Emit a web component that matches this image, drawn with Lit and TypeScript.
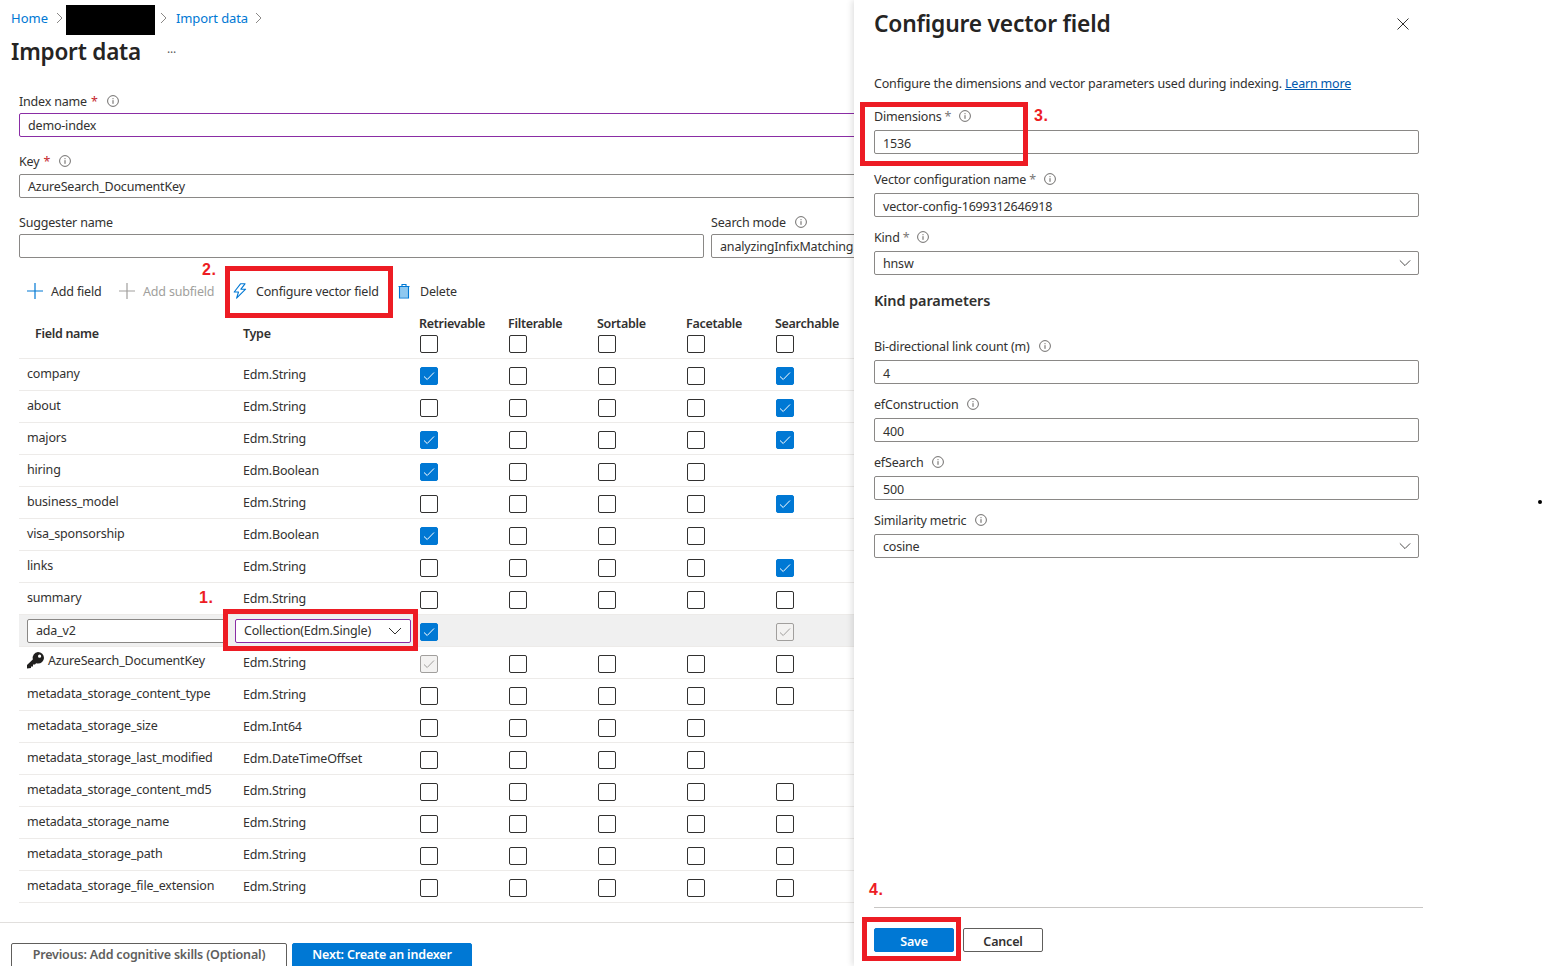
import { LitElement, html, css, svg, nothing } from 'lit';
import { customElement } from 'lit/decorators.js';

// R/F/S/A/Se flags: 0 empty, 1 checked, 2 disabled-checked, -1 no box
type Row = { name: string; type: string; flags: number[]; key?: boolean; editing?: boolean };

const rows: Row[] = [
  { name: 'company', type: 'Edm.String', flags: [1, 0, 0, 0, 1] },
  { name: 'about', type: 'Edm.String', flags: [0, 0, 0, 0, 1] },
  { name: 'majors', type: 'Edm.String', flags: [1, 0, 0, 0, 1] },
  { name: 'hiring', type: 'Edm.Boolean', flags: [1, 0, 0, 0, -1] },
  { name: 'business_model', type: 'Edm.String', flags: [0, 0, 0, 0, 1] },
  { name: 'visa_sponsorship', type: 'Edm.Boolean', flags: [1, 0, 0, 0, -1] },
  { name: 'links', type: 'Edm.String', flags: [0, 0, 0, 0, 1] },
  { name: 'summary', type: 'Edm.String', flags: [0, 0, 0, 0, 0] },
  { name: 'ada_v2', type: 'Collection(Edm.Single)', flags: [1, -1, -1, -1, 2], editing: true },
  { name: 'AzureSearch_DocumentKey', type: 'Edm.String', flags: [2, 0, 0, 0, 0], key: true },
  { name: 'metadata_storage_content_type', type: 'Edm.String', flags: [0, 0, 0, 0, 0] },
  { name: 'metadata_storage_size', type: 'Edm.Int64', flags: [0, 0, 0, 0, -1] },
  { name: 'metadata_storage_last_modified', type: 'Edm.DateTimeOffset', flags: [0, 0, 0, 0, -1] },
  { name: 'metadata_storage_content_md5', type: 'Edm.String', flags: [0, 0, 0, 0, 0] },
  { name: 'metadata_storage_name', type: 'Edm.String', flags: [0, 0, 0, 0, 0] },
  { name: 'metadata_storage_path', type: 'Edm.String', flags: [0, 0, 0, 0, 0] },
  { name: 'metadata_storage_file_extension', type: 'Edm.String', flags: [0, 0, 0, 0, 0] },
];

const columns = ['Retrievable', 'Filterable', 'Sortable', 'Facetable', 'Searchable'];

const info = html`<svg class="info" viewBox="0 0 12 12" width="12" height="12">
  <circle cx="6" cy="6" r="5.4" fill="none" stroke="#605e5c" stroke-width="0.9"></circle>
  <path d="M6 5.2v3.6M6 3.2v1" stroke="#605e5c" stroke-width="1" fill="none"></path>
</svg>`;

const chevronRight = html`<svg class="crumb-chevron" viewBox="0 0 7 12" width="7" height="12">
  <path d="M1 1l5 5-5 5" fill="none" stroke="#8a8886" stroke-width="1"></path>
</svg>`;

const chevronDown = html`<svg class="chevron-down" viewBox="0 0 14 8" width="14" height="8">
  <path d="M1 1l6 6 6-6" fill="none" stroke="#323130" stroke-width="1"></path>
</svg>`;

const plus = (color: string) => html`<svg viewBox="0 0 16 16" width="16" height="16">
  <path d="M8 0v16M0 8h16" fill="none" stroke=${color} stroke-width="1.2"></path>
</svg>`;

const bolt = svg`<path d="M7.5.8L1.2 9h4.3L3.6 15.2 12.6 6.2H7.9L12 .8z" fill="none" stroke="#0078d4" stroke-width="1.1" stroke-linejoin="round"></path>`;

const trash = svg`<path d="M3 4h8v10.5H3z" fill="#8ec8f0"></path>
  <path d="M1.5 3.5h11M2.5 3.5v11.5h9V3.5M5 3.5V1.5h4v2" fill="none" stroke="#0078d4" stroke-width="1.1"></path>`;

const keyIcon = svg`<path d="M11 0a6 6 0 0 1 6 6 6 6 0 0 1-6 5.6c-.7 0-1.3-.1-1.9-.3L8 12.4H6v2H4v1.6L0 16.4v-3.4l5.8-5.6A6 6 0 0 1 11 0zm1.6 2.6a1.6 1.6 0 1 0 0 3.2 1.6 1.6 0 0 0 0-3.2z" fill="#201f1e"></path>`;

@customElement('app-root')
export class AppRoot extends LitElement {
  static styles = css`
    :host {
      display: block;
      position: relative;
      width: 1544px;
      height: 966px;
      overflow: hidden;
      background: #fff;
      color: #323130;
      font-family: 'Noto Sans', 'Open Sans', sans-serif;
      font-size: 12.5px;
      letter-spacing: -0.18px;
    }

    a {
      color: #0078d4;
      text-decoration: none;
    }

    .main {
      display: flex;
      flex-direction: column;
      width: 900px;
      height: 966px;
      overflow: hidden;
    }

    .main > * {
      flex: none;
    }

    .crumbs {
      display: flex;
      align-items: flex-start;
      height: 30px;
      margin-top: 5px;
      padding-left: 11px;
      line-height: 26px;
      font-size: 13px;
      letter-spacing: 0;
    }

    .crumb-chevron {
      margin: 7px 3px 0 8px;
    }

    .redacted + .crumb-chevron {
      margin-left: 5px;
    }

    .crumbs .last {
      margin-left: 6px;
      letter-spacing: -0.1px;
    }

    .crumbs .last + .crumb-chevron {
      margin-left: 7px;
    }

    .redacted {
      width: 89px;
      height: 30px;
      background: #000;
    }

    .title {
      display: flex;
      align-items: center;
      height: 34px;
      padding-left: 11px;
    }

    h1 {
      margin: 0 0 2px;
      font-size: 22.5px;
      font-weight: 600;
      letter-spacing: -0.2px;
      color: #252423;
    }

    .more {
      margin: 0 0 0 26px;
      font-size: 12px;
      color: #605e5c;
    }

    .form {
      display: flex;
      flex-direction: column;
      margin-top: 24px;
      padding-left: 19px;
    }

    .field {
      margin-top: 16px;
    }

    .field:first-child {
      margin-top: 0;
    }

    .label {
      display: flex;
      align-items: center;
      box-sizing: border-box;
      height: 16px;
      padding-top: 2px;
      line-height: 16px;
      white-space: nowrap;
    }

    .label .info {
      margin-top: -2px;
      margin-left: 9px;
    }

    .label .req {
      margin-left: 4px;
      color: #c5262c;
    }

    .input {
      display: flex;
      align-items: center;
      justify-content: space-between;
      box-sizing: border-box;
      height: 24px;
      margin-top: 4px;
      padding: 2px 8px 0;
      background: #fff;
      border: 1px solid #8a8886;
      border-radius: 2px;
      white-space: nowrap;
      overflow: hidden;
    }

    .form .input {
      padding-top: 0;
    }

    .input.select {
      padding-top: 0;
    }

    .input.focused {
      border-color: #8a2da5;
    }

    .key-field .input {
      margin-top: 5px;
    }

    .split {
      display: flex;
      gap: 7px;
    }

    .split .suggester {
      width: 685px;
    }

    .split .mode {
      flex: 1;
    }

    .toolbar {
      display: flex;
      align-items: center;
      height: 32px;
      margin-top: 17px;
      padding-left: 27px;
    }

    .tool {
      display: flex;
      align-items: center;
      gap: 8px;
      padding-top: 1px;
      white-space: nowrap;
    }

    .tool svg {
      margin-top: -1px;
    }

    .tool.add { width: 92px; }
    .tool.sub { width: 114px; color: #a19f9d; }
    .tool.vector { width: 164px; gap: 9px; }
    .tool.delete { gap: 9px; }

    .row,
    .head {
      display: grid;
      grid-template-columns: 224px 177px repeat(5, 89px);
      margin-left: 19px;
      box-sizing: border-box;
      border-bottom: 1px solid #edebe9;
    }

    .head {
      height: 52px;
      font-weight: 600;
      letter-spacing: -0.3px;
    }

    .head .name {
      padding: 19px 0 0 16px;
      line-height: 16px;
    }

    .head .type {
      padding-top: 19px;
      line-height: 16px;
    }

    .head .col {
      display: flex;
      flex-direction: column;
      gap: 3px;
      padding-top: 9px;
      line-height: 16px;
    }

    .col-label {
      margin-left: -1px;
    }

    .row {
      height: 32px;
      align-items: center;
    }

    .row .name {
      display: flex;
      align-items: center;
      gap: 4px;
      padding: 0 0 2px 8px;
      white-space: nowrap;
    }

    .row.keyed .name {
      padding-bottom: 4px;
    }

    .row.editing {
      background: #f0f0f0;
    }

    .row.editing .name {
      padding-bottom: 0;
    }

    .name-input {
      width: 198px;
      margin: 0;
    }

    .type-select {
      width: 176px;
      margin: 0 0 0 -8px;
      border-color: #8a2da5;
    }

    .check {
      display: flex;
      align-items: center;
      justify-content: center;
      box-sizing: border-box;
      width: 18px;
      height: 18px;
      margin-top: 3px;
      border: 1px solid #323130;
      border-radius: 2px;
      background: #fff;
    }

    .head .check {
      margin-top: 0;
    }

    .check.on {
      background: #0078d4;
      border-color: #0078d4;
    }

    .check.locked {
      background: #f3f2f1;
      border-color: #a19f9d;
    }

    .page-foot {
      display: flex;
      gap: 5px;
      margin-top: 19px;
      padding: 20px 0 0 11px;
      border-top: 1px solid #e1dfdd;
    }

    .btn {
      display: flex;
      align-items: center;
      justify-content: center;
      box-sizing: border-box;
      border-radius: 2px;
      font-weight: 600;
      white-space: nowrap;
    }

    .btn.primary {
      background: #0078d4;
      border: 1px solid #0078d4;
      color: #fff;
    }

    .btn.plain {
      background: #fff;
      border: 1px solid #605e5c;
      color: #323130;
    }

    .page-foot .btn {
      height: 30px;
      padding-bottom: 8px;
    }

    .page-foot .prev { width: 276px; color: #605e5c; }
    .page-foot .next { width: 180px; }

    /* side panel sits over the blade */
    .panel {
      position: absolute;
      left: 854px;
      top: 0;
      display: flex;
      flex-direction: column;
      box-sizing: border-box;
      width: 690px;
      height: 966px;
      padding: 8px 0 0 20px;
      background: #fff;
      box-shadow: -2px 0 6px rgba(0, 0, 0, 0.12);
    }

    .panel-head {
      display: flex;
      align-items: center;
      justify-content: space-between;
      width: 535px;
      height: 32px;
    }

    h2 {
      margin: 0 0 2px;
      font-size: 22.8px;
      font-weight: 600;
      letter-spacing: -0.2px;
      color: #252423;
    }

    .desc {
      margin: 35px 0 0;
      padding-top: 1px;
      height: 15px;
      line-height: 16px;
      white-space: nowrap;
    }

    .desc a {
      color: #0058ad;
      text-decoration: underline;
    }

    .pfield {
      width: 545px;
      margin-top: 12px;
    }

    .pfield.wide {
      margin-top: 17px;
    }

    .pfield .input {
      margin-top: 6px;
    }

    .pfield .req {
      margin: 0 -1px 0 3px;
      color: #797775;
    }

    .pfield .chevron-down {
      width: 12px;
      margin-right: -1px;
    }

    h3 {
      margin: 15px 0 0;
      font-size: 14.5px;
      line-height: 20px;
      font-weight: 600;
      letter-spacing: -0.1px;
    }

    .spaced {
      margin-top: 28px;
    }

    .panel-foot {
      display: flex;
      gap: 9px;
      width: 549px;
      margin-top: auto;
      margin-bottom: 14px;
      padding-top: 20px;
      border-top: 1px solid #c8c6c4;
    }

    .panel-foot .btn {
      width: 80px;
      height: 24px;
      padding-top: 2px;
    }

    /* tutorial annotations drawn on top of the screenshot */
    .mark {
      position: absolute;
      box-sizing: border-box;
      border: 5px solid #ed1c24;
    }

    .m1 { left: 223px; top: 609px; width: 195px; height: 42px; }
    .m2 { left: 225px; top: 266px; width: 168px; height: 52px; }
    .m3 { left: 860px; top: 102px; width: 168px; height: 64px; }
    .m4 { left: 862px; top: 917px; width: 99px; height: 44px; }

    .step {
      position: absolute;
      color: #ed1c24;
      font-family: 'Liberation Sans', sans-serif;
      font-size: 16px;
      font-weight: 700;
      line-height: 18px;
      letter-spacing: 0.5px;
    }

    .s1 { left: 199px; top: 589px; }
    .s2 { left: 202px; top: 261px; }
    .s3 { left: 1034px; top: 107px; }
    .s4 { left: 869px; top: 881px; }

    .dot {
      position: absolute;
      left: 1538px;
      top: 500px;
      width: 4px;
      height: 4px;
      border-radius: 50%;
      background: #000;
    }
  `;

  private renderCheck(flag: number) {
    if (flag < 0) return html`<span></span>`;
    const cls = flag === 1 ? 'check on' : flag === 2 ? 'check locked' : 'check';
    const stroke = flag === 1 ? '#fff' : '#a19f9d';
    return html`<span class=${cls}>
      ${flag > 0
        ? html`<svg viewBox="0 0 12 10" width="12" height="10">
            <path d="M1 5.5l3.2 3L11 1.5" fill="none" stroke=${stroke} stroke-width="1"></path>
          </svg>`
        : nothing}
    </span>`;
  }

  private renderRow(row: Row) {
    if (row.editing) {
      return html`<div class="row editing">
        <div class="name"><div class="input select name-input">${row.name}</div></div>
        <div class="type"><div class="input select type-select">${row.type}${chevronDown}</div></div>
        ${row.flags.map((f) => this.renderCheck(f))}
      </div>`;
    }
    return html`<div class="row ${row.key ? 'keyed' : ''}">
      <div class="name">
        ${row.key ? html`<svg viewBox="0 0 17 17" width="17" height="17">${keyIcon}</svg>` : nothing}
        ${row.name}
      </div>
      <div class="type">${row.type}</div>
      ${row.flags.map((f) => this.renderCheck(f))}
    </div>`;
  }

  private renderPanelField(label: string, value: string, opts: { req?: boolean; select?: boolean; cls?: string } = {}) {
    return html`<div class="pfield ${opts.cls ?? ''}">
      <div class="label">${label}${opts.req ? html`<span class="req">*</span>` : nothing}${info}</div>
      <div class="input ${opts.select ? 'select' : ''}">${value}${opts.select ? chevronDown : nothing}</div>
    </div>`;
  }

  render() {
    return html`
      <div class="main">
        <nav class="crumbs">
          <a>Home</a>${chevronRight}
          <span class="redacted"></span>${chevronRight}
          <a class="last">Import data</a>${chevronRight}
        </nav>
        <div class="title">
          <h1>Import data</h1>
          <span class="more">···</span>
        </div>

        <div class="form">
          <div class="field">
            <div class="label">Index name<span class="req">*</span>${info}</div>
            <div class="input focused">demo-index</div>
          </div>
          <div class="field key-field">
            <div class="label">Key<span class="req">*</span>${info}</div>
            <div class="input">AzureSearch_DocumentKey</div>
          </div>
          <div class="field split">
            <div class="suggester">
              <div class="label">Suggester name</div>
              <div class="input"></div>
            </div>
            <div class="mode">
              <div class="label">Search mode${info}</div>
              <div class="input">analyzingInfixMatching</div>
            </div>
          </div>
        </div>

        <div class="toolbar">
          <div class="tool add">${plus('#0078d4')}Add field</div>
          <div class="tool sub">${plus('#a19f9d')}Add subfield</div>
          <div class="tool vector"><svg viewBox="0 0 14 16" width="14" height="16">${bolt}</svg>Configure vector field</div>
          <div class="tool delete"><svg viewBox="0 0 14 16" width="14" height="16">${trash}</svg>Delete</div>
        </div>

        <div class="head">
          <div class="name">Field name</div>
          <div class="type">Type</div>
          ${columns.map((c) => html`<div class="col"><span class="col-label">${c}</span>${this.renderCheck(0)}</div>`)}
        </div>
        ${rows.map((r) => this.renderRow(r))}

        <div class="page-foot">
          <div class="btn plain prev">Previous: Add cognitive skills (Optional)</div>
          <div class="btn primary next">Next: Create an indexer</div>
        </div>
      </div>

      <aside class="panel">
        <div class="panel-head">
          <h2>Configure vector field</h2>
          <svg viewBox="0 0 12 12" width="12" height="12">
            <path d="M.5.5l11 11M11.5.5l-11 11" fill="none" stroke="#323130" stroke-width="1"></path>
          </svg>
        </div>
        <p class="desc">Configure the dimensions and vector parameters used during indexing. <a>Learn more</a></p>
        ${this.renderPanelField('Dimensions', '1536', { req: true, cls: 'wide' })}
        ${this.renderPanelField('Vector configuration name', 'vector-config-1699312646918', { req: true, cls: 'wide' })}
        ${this.renderPanelField('Kind', 'hnsw', { req: true, select: true })}
        <h3>Kind parameters</h3>
        ${this.renderPanelField('Bi-directional link count (m)', '4', { cls: 'spaced' })}
        ${this.renderPanelField('efConstruction', '400')}
        ${this.renderPanelField('efSearch', '500')}
        ${this.renderPanelField('Similarity metric', 'cosine', { select: true })}
        <div class="panel-foot">
          <div class="btn primary">Save</div>
          <div class="btn plain">Cancel</div>
        </div>
      </aside>

      <div class="mark m1"></div>
      <div class="mark m2"></div>
      <div class="mark m3"></div>
      <div class="mark m4"></div>
      <span class="step s1">1.</span>
      <span class="step s2">2.</span>
      <span class="step s3">3.</span>
      <span class="step s4">4.</span>
      <div class="dot"></div>
    `;
  }
}
